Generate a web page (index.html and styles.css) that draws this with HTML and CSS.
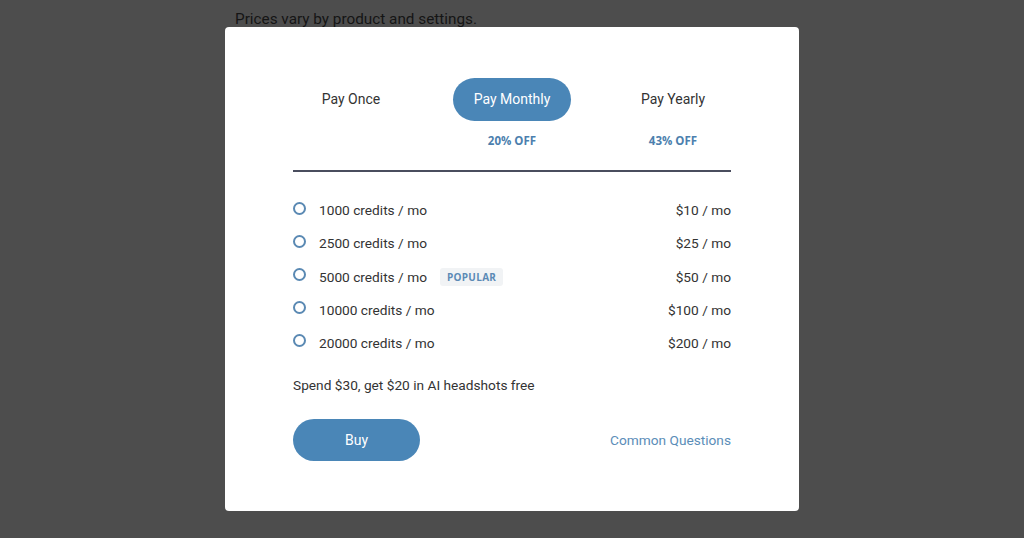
FILE: index.html
```html
<!DOCTYPE html>
<html lang="en">
<head>
<meta charset="utf-8">
<title>Pricing</title>
<link rel="stylesheet" href="styles.css">
</head>
<body>
<p class="page-note">Prices vary by product and settings.</p>
<div class="overlay">
  <div class="modal">
    <div class="tabs">
      <div class="tab">Pay Once</div>
      <div class="tab tab-active">Pay Monthly</div>
      <div class="tab">Pay Yearly</div>
      <div class="off"></div>
      <div class="off">20% OFF</div>
      <div class="off">43% OFF</div>
    </div>
    <div class="divider"></div>
    <ul class="plans">
      <li class="plan"><span class="radio"></span><span class="plan-name">1000 credits / mo</span><span class="price">$10 / mo</span></li>
      <li class="plan"><span class="radio"></span><span class="plan-name">2500 credits / mo</span><span class="price">$25 / mo</span></li>
      <li class="plan"><span class="radio"></span><span class="plan-name">5000 credits / mo</span><span class="badge">POPULAR</span><span class="price">$50 / mo</span></li>
      <li class="plan"><span class="radio"></span><span class="plan-name">10000 credits / mo</span><span class="price">$100 / mo</span></li>
      <li class="plan"><span class="radio"></span><span class="plan-name">20000 credits / mo</span><span class="price">$200 / mo</span></li>
    </ul>
    <p class="promo">Spend $30, get $20 in AI headshots free</p>
    <div class="actions">
      <button class="buy">Buy</button>
      <a class="faq" href="#">Common Questions</a>
    </div>
  </div>
</div>
</body>
</html>
```
FILE: styles.css
```css
html, body {
  margin: 0;
  padding: 0;
}
body {
  background: #4d4d4d;
  font-family: Roboto, "Liberation Sans", sans-serif;
  color: #333;
  width: 1024px;
  height: 538px;
  overflow: hidden;
}
.page-note {
  margin: 0;
  padding: 10px 0 0 235px;
  font-size: 15.3px;
  line-height: 19px;
  color: #151515;
}
.overlay {
  position: fixed;
  inset: 0;
  display: flex;
  align-items: center;
  justify-content: center;
}
.modal {
  width: 438px;
  padding: 51px 68px 50px;
  background: #fff;
  border-radius: 4px;
}
.tabs {
  display: grid;
  grid-template-columns: repeat(3, 161px);
  justify-content: center;
  margin: 0 -30px;
  justify-items: center;
}
.tab {
  height: 43px;
  line-height: 43px;
  font-size: 14px;
  color: #333;
  padding: 0 21px;
  border-radius: 22px;
}
.tab-active {
  background: #4a86b7;
  color: #fff;
}
.off {
  margin-top: 12px;
  height: 16px;
  line-height: 16px;
  font-family: "Open Sans", sans-serif;
  font-weight: 700;
  font-size: 11.5px;
  color: #4c7fae;
}
.divider {
  margin-top: 21px;
  height: 2px;
  background: #4a4d5e;
}
.plans {
  list-style: none;
  margin: 0;
  padding: 22px 0 0;
}
.plan {
  display: flex;
  align-items: center;
  height: 33.2px;
  font-size: 13.7px;
  color: #333;
}
.radio {
  width: 9px;
  height: 9px;
  border: 2px solid #5a89b3;
  border-radius: 50%;
  margin: -4px 13px 0 0;
  flex: none;
}
.badge {
  margin-left: 13px;
  padding: 0 7px;
  height: 18px;
  line-height: 18px;
  border-radius: 3px;
  background: #f1f3f5;
  font-family: "Open Sans", sans-serif;
  font-weight: 700;
  font-size: 10px;
  letter-spacing: 0.3px;
  color: #5b8ab5;
}
.price {
  margin-left: auto;
}
.promo {
  margin: 16px 0 0;
  font-size: 13.7px;
  line-height: 20px;
  color: #333;
}
.actions {
  margin-top: 24px;
  display: flex;
  align-items: center;
  justify-content: space-between;
}
.buy {
  width: 127px;
  height: 42px;
  border: none;
  border-radius: 21px;
  background: #4a86b7;
  color: #fff;
  font-family: Roboto, "Liberation Sans", sans-serif;
  font-size: 14px;
  padding: 0;
}
.faq {
  font-size: 13.7px;
  color: #5b8db8;
  text-decoration: none;
}
```
